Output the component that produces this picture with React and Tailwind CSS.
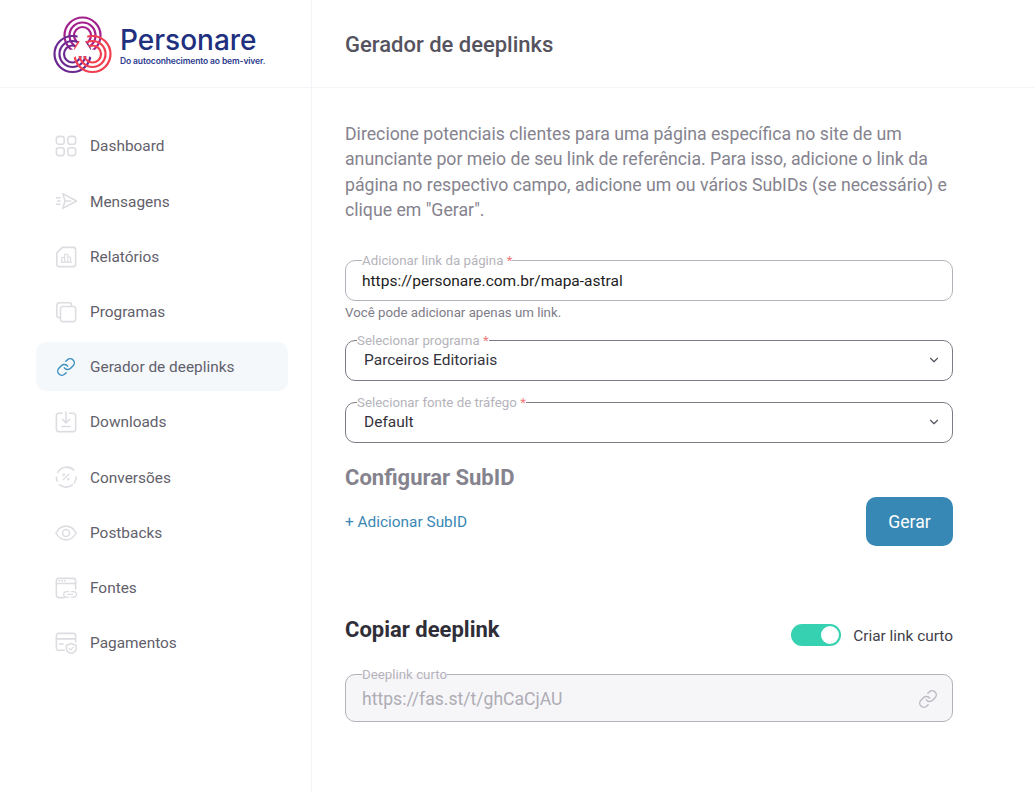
import { ChevronDown, Link } from 'lucide-react';

function Logo() {
  const rings = [
    { cx: 30.5, cy: 21.5, color: '#a3208c' },
    { cx: 20.5, cy: 40, color: '#6b2a92' },
    { cx: 40.5, cy: 40, color: '#f23f50' },
  ];
  return (
    <svg width="60" height="60" viewBox="0 0 60 60" fill="none" className="shrink-0">
      {rings.map((r) => (
        <g key={r.color} stroke={r.color} strokeWidth="2.2">
          <circle cx={r.cx} cy={r.cy} r="18" />
          <circle cx={r.cx} cy={r.cy} r="13" />
          <circle cx={r.cx} cy={r.cy} r="8.5" />
        </g>
      ))}
      <circle cx="30.4" cy="23.5" r="5" fill="#fff" />
      <path d="M30.4 27 L39 40 H22 Z" fill="#fff" stroke="#fff" strokeWidth="4" strokeLinejoin="round" />
      <circle cx="20.5" cy="39.5" r="4" fill="#fff" />
      <circle cx="40.5" cy="39.5" r="4" fill="#fff" />
    </svg>
  );
}

const iconProps = {
  width: 22,
  height: 22,
  viewBox: '0 0 24 24',
  fill: 'none',
  stroke: '#dddce1',
  strokeWidth: 1.7,
  strokeLinecap: 'round',
  strokeLinejoin: 'round',
};

function DashIcon() {
  return (
    <svg {...iconProps}>
      <rect x="1.5" y="1.5" width="8.5" height="8.5" rx="2.5" />
      <rect x="14" y="1.5" width="8.5" height="8.5" rx="2.5" />
      <rect x="1.5" y="14" width="8.5" height="8.5" rx="2.5" />
      <rect x="14" y="14" width="8.5" height="8.5" rx="2.5" />
    </svg>
  );
}
function SendIcon() {
  return (
    <svg {...iconProps}>
      <path d="M8.5 4 L23.5 12 L8.5 20 L11 12 Z" />
      <path d="M11 12 H17" />
      <path d="M1.5 8.5 H5.5 M3 12 H5.5 M1.5 15.5 H5.5" />
    </svg>
  );
}
function ReportIcon() {
  return (
    <svg {...iconProps}>
      <path d="M8 1.5 H20 a2.5 2.5 0 0 1 2.5 2.5 V20 a2.5 2.5 0 0 1 -2.5 2.5 H4.5 A2.5 2.5 0 0 1 2 20 V7.5 Z" />
      <path d="M7.5 17.5 V12.5 H10.5 V17.5 M10.5 17.5 V9 H14 V17.5 M14 17.5 V12 H17 V17.5 M6.5 17.5 H18" strokeWidth="1.3" />
    </svg>
  );
}
function CopyIcon() {
  return (
    <svg {...iconProps}>
      <path d="M5 18 H4.5 A2.5 2.5 0 0 1 2 15.5 V4.5 A2.5 2.5 0 0 1 4.5 2 H15.5 A2.5 2.5 0 0 1 18 4.5 V5" />
      <rect x="6" y="6" width="16.5" height="16.5" rx="2.5" />
    </svg>
  );
}
function DownloadIcon() {
  return (
    <svg {...iconProps}>
      <path d="M8 2.5 H4 A2.5 2.5 0 0 0 1.5 5 V20 A2.5 2.5 0 0 0 4 22.5 H20 A2.5 2.5 0 0 0 22.5 20 V5 A2.5 2.5 0 0 0 20 2.5 H16" />
      <path d="M12 1 V12.5 M8 9 L12 13 L16 9 M7.5 17 H16.5" />
    </svg>
  );
}
function ConvIcon() {
  return (
    <svg {...iconProps}>
      <path d="M3 7 A11 11 0 0 1 20.5 4.5" />
      <path d="M23 12 A11 11 0 0 1 21 18.5" />
      <path d="M19 20.5 A11 11 0 0 1 5 20.5" />
      <path d="M1.5 12 A11 11 0 0 0 2.5 16.5" />
      <path d="M9 15 L15 9" strokeWidth="1.3" />
      <circle cx="9.5" cy="9.5" r="0.8" strokeWidth="1.2" />
      <circle cx="14.5" cy="14.5" r="0.8" strokeWidth="1.2" />
    </svg>
  );
}
function EyeIcon() {
  return (
    <svg {...iconProps}>
      <path d="M1 12 C4 6.5 8 4.5 12 4.5 S20 6.5 23 12 C20 17.5 16 19.5 12 19.5 S4 17.5 1 12 Z" />
      <circle cx="12" cy="12" r="3.8" />
    </svg>
  );
}
function SourceIcon() {
  return (
    <svg {...iconProps}>
      <path d="M10 22.5 H4 A2.5 2.5 0 0 1 1.5 20 V4 A2.5 2.5 0 0 1 4 1.5 H20 A2.5 2.5 0 0 1 22.5 4 V13" />
      <path d="M1.5 7 H22.5" />
      <path d="M4.5 4.2 H5 M7.5 4.2 H8 M10.5 4.2 H11" />
      <path d="M15 16 H12.5 A3 3 0 0 0 12.5 22 H15 M18 16 H20.5 A3 3 0 0 1 20.5 22 H18 M14 19 H19" strokeWidth="1.3" />
    </svg>
  );
}
function PayIcon() {
  return (
    <svg {...iconProps}>
      <path d="M10 20 H4 A2.5 2.5 0 0 1 1.5 17.5 V4 A2.5 2.5 0 0 1 4 1.5 H20 A2.5 2.5 0 0 1 22.5 4 V11" />
      <path d="M1.5 7.5 H22.5" />
      <path d="M5 13 H9" />
      <path d="M17.5 12.5 L23 14.5 V18 C23 20.5 20.5 22.5 17.5 23.5 C14.5 22.5 12.5 20.5 12.5 18 V14.5 Z" />
      <path d="M15.5 18 L17.2 19.6 L20 16.6" strokeWidth="1.3" />
    </svg>
  );
}

const navItems = [
  { label: 'Dashboard', icon: <DashIcon /> },
  { label: 'Mensagens', icon: <SendIcon /> },
  { label: 'Relatórios', icon: <ReportIcon /> },
  { label: 'Programas', icon: <CopyIcon /> },
  { label: 'Gerador de deeplinks', icon: <Link size={20} color="#3a8fc0" strokeWidth={1.7} />, active: true },
  { label: 'Downloads', icon: <DownloadIcon /> },
  { label: 'Conversões', icon: <ConvIcon /> },
  { label: 'Postbacks', icon: <EyeIcon /> },
  { label: 'Fontes', icon: <SourceIcon /> },
  { label: 'Pagamentos', icon: <PayIcon /> },
];

function Field({ label, required, inset, borderClass, children }) {
  return (
    <fieldset className={`h-[47px] rounded-[10px] border ${borderClass} ${inset} min-w-0`}>
      <legend className="text-[13.3px] leading-[13px] text-[#b5b3bb] whitespace-nowrap">
        {label}
        {required && <span className="text-[#ef7a7a]"> *</span>}
      </legend>
      {children}
    </fieldset>
  );
}

export default function App() {
  return (
    <div className="flex min-h-[792px] bg-white font-['Roboto',sans-serif]">
      {/* sidebar */}
      <aside className="w-[312px] shrink-0 border-r border-[#f4f4f8]">
        <div className="h-[88px] border-b border-[#f4f4f8] pl-[52px] flex items-center gap-[8px]">
          <Logo />
          <div className="flex flex-col pt-[3px]">
            <span className="font-['Inter',sans-serif] text-[28px] leading-[31px] font-medium text-[#20307f]">
              Personare
            </span>
            <span className="font-['Inter',sans-serif] text-[8.5px] leading-[10px] font-semibold tracking-[-0.12px] text-[#2c3b8c]">
              Do autoconhecimento ao bem-viver.
            </span>
          </div>
        </div>
        <nav className="pt-[33.7px] pl-[36px] pr-[23px] flex flex-col gap-[6.2px]">
          {navItems.map((item) => (
            <div
              key={item.label}
              className={`h-[49px] rounded-[10px] flex items-center pl-[18px] ${item.active ? 'bg-[#f5f8fb]' : ''}`}
            >
              <span className="w-[24px] h-[24px] flex items-center justify-center">{item.icon}</span>
              <span className="ml-[12px] pt-[1.5px] text-[15.4px] text-[#62606b]">{item.label}</span>
            </div>
          ))}
        </nav>
      </aside>

      {/* main */}
      <main className="flex-1 min-w-0">
        <div className="h-[88px] border-b border-[#f4f4f8] pl-[33px] pt-[2px] flex items-center">
          <h1 className="text-[22px] font-medium text-[#55535e]">Gerador de deeplinks</h1>
        </div>
        <div className="pl-[33px] pr-[81px] pt-[34px]">
          <p className="text-[17.7px] leading-[25.4px] text-[#85838e]">
            Direcione potenciais clientes para uma página específica no site de um anunciante por meio de seu link de
            referência. Para isso, adicione o link da página no respectivo campo, adicione um ou vários SubIDs (se
            necessário) e clique em "Gerar".
          </p>

          <div className="mt-[30px]">
            <Field label="Adicionar link da página" required inset="pl-[16px]" borderClass="border-[#b4b2ba]">
              <div className="text-[15.5px] leading-[20px] text-[#1d1c22] mt-[4px]">https://personare.com.br/mapa-astral</div>
            </Field>
          </div>
          <p className="mt-[4px] text-[13.25px] leading-[16px] text-[#7e7c87]">Você pode adicionar apenas um link.</p>

          <div className="mt-[13px]">
            <Field label="Selecionar programa" required inset="pl-[11px]" borderClass="border-[#7d7b86]">
              <div className="flex items-center justify-between pl-[7px] pr-[11px] mt-[3px] text-[15.5px] leading-[20px] text-[#34323c]">
                Parceiros Editoriais
                <ChevronDown size={14} color="#55535e" strokeWidth={2} />
              </div>
            </Field>
          </div>
          <div className="mt-[15px]">
            <Field label="Selecionar fonte de tráfego" required inset="pl-[11px]" borderClass="border-[#7d7b86]">
              <div className="flex items-center justify-between pl-[7px] pr-[11px] mt-[3px] text-[15.5px] leading-[20px] text-[#34323c]">
                Default
                <ChevronDown size={14} color="#55535e" strokeWidth={2} />
              </div>
            </Field>
          </div>

          <h2 className="mt-[22px] text-[22px] leading-[26px] font-bold text-[#85838e]">Configurar SubID</h2>
          <div className="mt-[6px] flex items-center justify-between">
            <span className="pt-[2px] text-[15.4px] text-[#3a87b5]">+ Adicionar SubID</span>
            <button className="w-[87px] h-[49px] pt-[2px] rounded-[10px] bg-[#3788b5] text-white text-[17.6px]">Gerar</button>
          </div>

          <div className="mt-[65px] flex items-center justify-between">
            <h2 className="pt-[2px] text-[22px] leading-[26px] font-bold text-[#2f2e38]">Copiar deeplink</h2>
            <div className="flex items-center gap-[12px] mt-[12px]">
              <div className="w-[50px] h-[22px] rounded-full bg-[#36d1b0] flex items-center justify-end pr-[2px]">
                <div className="w-[18px] h-[18px] rounded-full bg-white" />
              </div>
              <span className="pt-[2px] text-[15.4px] text-[#3f3e49]">Criar link curto</span>
            </div>
          </div>

          <div className="mt-[20px]">
            <fieldset className="h-[54px] rounded-[10px] border border-[#b4b2ba] bg-[#f6f6f9] pl-[16px] min-w-0">
              <legend className="text-[13.3px] leading-[13px] text-[#b5b3bb] whitespace-nowrap">Deeplink curto</legend>
              <div className="flex items-center justify-between pr-[14px] mt-[6px] text-[17.6px] leading-[24px] text-[#aeacb4]">
                https://fas.st/t/ghCaCjAU
                <Link size={20} color="#bcbac2" strokeWidth={1.7} />
              </div>
            </fieldset>
          </div>
        </div>
      </main>
    </div>
  );
}
